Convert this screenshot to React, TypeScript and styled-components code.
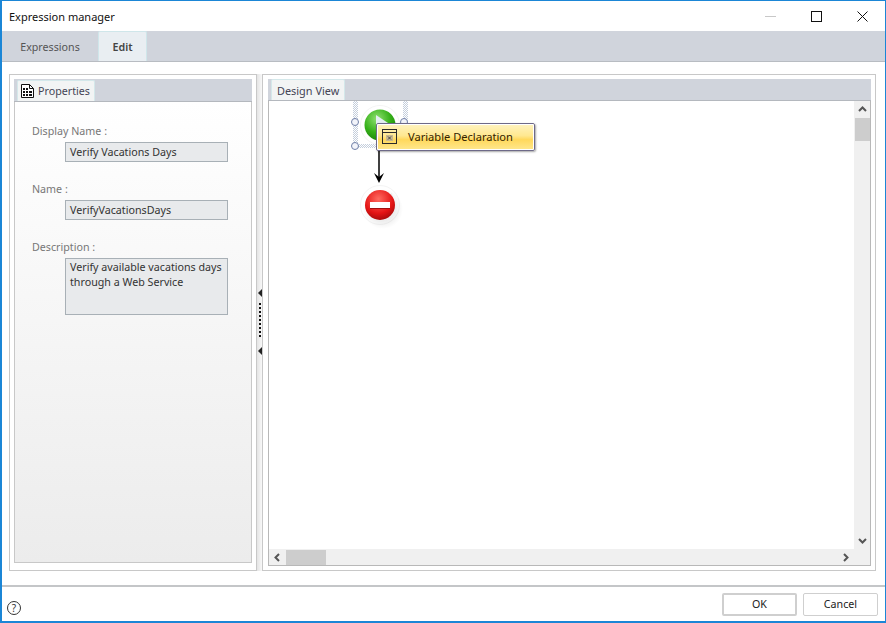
import styled, { createGlobalStyle } from 'styled-components'

const GlobalStyle = createGlobalStyle`
  html, body { margin: 0; padding: 0; background: #fff; }
  * { box-sizing: border-box; }
`

const Window = styled.div`
  width: 886px;
  height: 623px;
  display: flex;
  flex-direction: column;
  background: #fff;
  border: 1px solid #1b86d6;
  border-width: 1px 1px 2px 2px;
  font-family: 'Noto Sans', 'Open Sans', sans-serif;
  font-size: 10.7px;
  color: #333;
  overflow: hidden;
`

const TitleBar = styled.div`
  height: 30px;
  flex: none;
  display: flex;
  align-items: center;
  justify-content: space-between;
  padding-left: 7px;
  font-size: 11px;
  color: #111;
`

const WindowButtons = styled.div`
  display: flex;
  align-items: center;
`

const WindowButton = styled.span`
  width: 46px;
  height: 30px;
  display: flex;
  align-items: center;
  justify-content: center;
`

const TabBar = styled.div`
  height: 31px;
  flex: none;
  display: flex;
  align-items: flex-end;
  background: #d0d4dc;
  border-bottom: 1px solid #b8bcc2;
`

const MainTab = styled.div<{ $active?: boolean }>`
  height: 30px;
  width: ${(p) => (p.$active ? '49px' : '96px')};
  padding-top: ${(p) => (p.$active ? '0' : '2px')};
  display: flex;
  align-items: center;
  justify-content: center;
  font-weight: ${(p) => (p.$active ? 600 : 400)};
  color: ${(p) => (p.$active ? '#444' : '#555')};
  background: ${(p) => (p.$active ? '#e9eef2' : 'transparent')};
  border: ${(p) => (p.$active ? '1px solid #cfe6ea' : 'none')};
  border-bottom: none;
  border-radius: 2px 2px 0 0;
`

const Body = styled.div`
  flex: 1;
  min-height: 0;
  display: grid;
  grid-template-columns: 248px 5px 1fr;
  padding: 12px 9px 14px 7px;
  border-bottom: 2px solid #c4c6c8;
`

const Panel = styled.div<{ $side: 'left' | 'right' }>`
  display: flex;
  flex-direction: column;
  border: 1px solid #c8c8c8;
  padding: 4px 4px ${(p) => (p.$side === 'left' ? '7px' : '4px')}
    ${(p) => (p.$side === 'left' ? '4px' : '5px')};
`

const Splitter = styled.div`
  background: linear-gradient(90deg, #e4e4e4, #f8f8f8);
  display: flex;
  flex-direction: column;
  align-items: center;
  justify-content: center;
  gap: 6px;
  padding-bottom: 1px;
`

const SplitterArrow = styled.span`
  width: 0;
  height: 0;
  border-top: 4px solid transparent;
  border-bottom: 4px solid transparent;
  border-right: 4px solid #222;
`

const SplitterDots = styled.span`
  width: 2px;
  height: 36px;
  margin-bottom: 2px;
  background: repeating-linear-gradient(180deg, #111 0 2px, transparent 2px 4px);
`

const TabStrip = styled.div<{ $short?: boolean }>`
  height: ${(p) => (p.$short ? '22px' : '23px')};
  flex: none;
  display: flex;
  align-items: flex-end;
  padding-left: 3px;
  background: #d0d4dc;
  border-bottom: 1px solid #b4b8be;
`

const PanelTab = styled.div<{ $wide?: boolean }>`
  height: 21px;
  display: flex;
  align-items: center;
  gap: 4px;
  padding: ${(p) => (p.$wide ? '0 5px' : '0 4px 0 3px')};
  font-size: ${(p) => (p.$wide ? '10.9px' : 'inherit')};
  background: #f2f4f4;
  border: 1px solid #d4e8ea;
  border-bottom: none;
  border-radius: 2px 2px 0 0;
  color: #445;
`

const PropertiesBox = styled.div`
  flex: 1;
  display: flex;
  flex-direction: column;
  padding: 21px 0 0 17px;
  border: 1px solid #c8c8c8;
  border-top: none;
  background: linear-gradient(180deg, #fff 0%, #ececec 100%);
`

const FieldLabel = styled.div`
  height: 16px;
  line-height: 16px;
  color: #777;
`

const FieldValue = styled.div<{ $tall?: boolean }>`
  width: 163px;
  height: ${(p) => (p.$tall ? '57px' : '20px')};
  margin: 3px 0 19px 33px;
  padding: ${(p) => (p.$tall ? '1px 4px' : '0 4px')};
  line-height: ${(p) => (p.$tall ? '15px' : '18px')};
  background: #e8eaec;
  border: 1px solid #a8b0b6;
  color: #333;
  white-space: nowrap;
`

const DesignArea = styled.div`
  flex: 1;
  min-height: 0;
  display: grid;
  grid-template-columns: 1fr 16px;
  grid-template-rows: 1fr 16px;
  border: 1px solid #b8b8b8;
  border-top: none;
`

const Canvas = styled.div`
  position: relative;
  background: #fff;
  overflow: hidden;
`

const VScroll = styled.div`
  display: flex;
  flex-direction: column;
  align-items: center;
  background: #f0f0f0;
`

const HScroll = styled.div`
  display: flex;
  align-items: center;
  background: #f0f0f0;
`

const ScrollArrow = styled.span<{ $vertical?: boolean }>`
  width: ${(p) => (p.$vertical ? '16px' : '17px')};
  height: ${(p) => (p.$vertical ? '17px' : '16px')};
  flex: none;
  display: flex;
  align-items: center;
  justify-content: center;
`

const VThumb = styled.div`
  width: 15px;
  height: 23px;
  background: #cdcdcd;
`

const HThumb = styled.div`
  width: 40px;
  height: 15px;
  background: #cdcdcd;
`

const Spacer = styled.div`
  flex: 1;
`

const Corner = styled.div`
  background: #f0f0f0;
`

const SelectionFrame = styled.div`
  position: absolute;
  left: 84px;
  top: 0;
  width: 55px;
  height: 47px;
  background: repeating-conic-gradient(#c4cedc 0 25%, #fff 0 50%) 0 0 / 2px 2px;
  &::after {
    content: '';
    position: absolute;
    left: 5px;
    right: 5px;
    top: 0;
    bottom: 4px;
    background: #fff;
  }
`

const Handle = styled.span<{ $x: number; $y: number }>`
  position: absolute;
  left: ${(p) => p.$x}px;
  top: ${(p) => p.$y}px;
  width: 8px;
  height: 8px;
  border-radius: 50%;
  background: #f2f4fa;
  border: 1px solid #7080a8;
`

const NodeIcon = styled.svg<{ $x: number; $y: number }>`
  position: absolute;
  left: ${(p) => p.$x}px;
  top: ${(p) => p.$y}px;
`

const Popup = styled.div`
  position: absolute;
  left: 107px;
  top: 22px;
  width: 159px;
  height: 28px;
  display: flex;
  align-items: center;
  gap: 11px;
  padding: 0 0 1px 5px;
  font-size: 11.1px;
  color: #332200;
  background: linear-gradient(180deg, #fff3c0 0%, #ffe890 45%, #ffd85c 60%, #ffe88e 100%);
  border: 1px solid #6e6a88;
  outline: 1px solid #fff;
  outline-offset: -2px;
  border-radius: 2px;
  box-shadow: 1px 1px 2px rgba(0, 0, 0, 0.35);
`

const Footer = styled.div`
  flex: none;
  height: 34px;
  display: flex;
  align-items: center;
  justify-content: space-between;
  padding: 0 7px 0 5px;
`

const HelpIcon = styled.span`
  width: 14px;
  height: 14px;
  margin-top: 7px;
  display: flex;
  align-items: center;
  justify-content: center;
  border: 1px solid #333;
  border-radius: 50%;
  font-size: 10px;
  line-height: 1;
  color: #333;
`

const Buttons = styled.div`
  display: flex;
  gap: 6px;
`

const Button = styled.div<{ $primary?: boolean }>`
  width: 75px;
  height: 23px;
  display: flex;
  align-items: center;
  justify-content: center;
  background: #fff;
  color: #222;
  border: ${(p) => (p.$primary ? '2px solid #cfcfcf' : '1px solid #cfcfcf')};
  border-radius: 2px;
`

function PropertiesIcon() {
  return (
    <svg width="13" height="14" viewBox="0 0 13 14">
      <path d="M0.5 0.5H8.5L12.5 4.5V13.5H0.5Z" fill="#fff" stroke="#111" />
      <path d="M8.5 0.5V4.5H12.5" fill="none" stroke="#111" />
      <path
        d="M2 4h2v2H2zM5 4h2v2H5zM2 7h2v2H2zM5 7h2v2H5zM8 7h3v2H8zM2 10h2v2H2zM5 10h2v2H5zM8 10h3v2H8z"
        fill="#111"
      />
    </svg>
  )
}

function StartNode() {
  return (
    <NodeIcon $x={91} $y={4} width="40" height="40" viewBox="0 0 40 40">
      <defs>
        <radialGradient id="greenBall" cx="0.4" cy="0.3" r="0.8">
          <stop offset="0" stopColor="#8fe070" />
          <stop offset="0.55" stopColor="#35b018" />
          <stop offset="1" stopColor="#157a08" />
        </radialGradient>
      </defs>
      <circle cx="20" cy="20" r="19.5" fill="#fff" stroke="#f4f4f4" />
      <circle cx="20" cy="20" r="15.5" fill="url(#greenBall)" />
      <path d="M16 10 L31 20 L16 29 Z" fill="#e4eef2" />
    </NodeIcon>
  )
}

function EndNode() {
  return (
    <NodeIcon $x={86} $y={79} width="50" height="50" viewBox="0 0 50 50">
      <defs>
        <radialGradient id="redBall" cx="0.45" cy="0.3" r="0.8">
          <stop offset="0" stopColor="#ff6a60" />
          <stop offset="0.6" stopColor="#e41414" />
          <stop offset="1" stopColor="#900808" />
        </radialGradient>
        <radialGradient id="redShade">
          <stop offset="0.6" stopColor="#000" stopOpacity="0.07" />
          <stop offset="1" stopColor="#000" stopOpacity="0" />
        </radialGradient>
      </defs>
      <circle cx="25" cy="25" r="19.5" fill="#fff" stroke="#f4f4f4" />
      <circle cx="28" cy="29" r="20" fill="url(#redShade)" />
      <path d="M37 13l1 7-6-4z" fill="#eaeaea" />
      <circle cx="25" cy="25" r="15" fill="url(#redBall)" />
      <rect x="15" y="22" width="20" height="6" fill="#fff" />
      <rect x="15" y="28" width="20" height="1" fill="#a01010" />
    </NodeIcon>
  )
}

function Connector() {
  return (
    <NodeIcon $x={102} $y={48} width="16" height="36" viewBox="0 0 16 36">
      <path d="M8 0V30" stroke="#000" strokeWidth="1.5" fill="none" />
      <path d="M3 24 L8 28 L13 24 L8 34 Z" fill="#000" />
    </NodeIcon>
  )
}

function VariableIcon() {
  return (
    <svg width="15" height="15" viewBox="0 0 15 15">
      <rect x="0.5" y="0.5" width="14" height="14" fill="none" stroke="#2a2a2a" />
      <path d="M1 3.5H14" stroke="#2a2a2a" />
      <rect x="4" y="6" width="7" height="6" fill="#c8b890" />
      <path d="M6 7.5l3 3M9 7.5l-3 3" stroke="#444" fill="none" />
    </svg>
  )
}

function Chevron({ dir }: { dir: 'up' | 'down' | 'left' | 'right' }) {
  const paths = {
    up: 'M1 6 L4.5 2.5 L8 6',
    down: 'M1 3 L4.5 6.5 L8 3',
    left: 'M6 1 L2.5 4.5 L6 8',
    right: 'M3 1 L6.5 4.5 L3 8',
  }
  return (
    <svg width="9" height="9" viewBox="0 0 9 9">
      <path d={paths[dir]} stroke="#555" strokeWidth="2" fill="none" />
    </svg>
  )
}

export default function App() {
  return (
    <Window>
      <GlobalStyle />
      <TitleBar>
        Expression manager
        <WindowButtons>
          <WindowButton>
            <svg width="11" height="11" viewBox="0 0 11 11">
              <path d="M0 5.5H11" stroke="#c8c8c8" />
            </svg>
          </WindowButton>
          <WindowButton>
            <svg width="11" height="11" viewBox="0 0 11 11">
              <rect x="0.5" y="0.5" width="10" height="10" fill="none" stroke="#111" />
            </svg>
          </WindowButton>
          <WindowButton>
            <svg width="11" height="11" viewBox="0 0 11 11">
              <path d="M0.5 0.5L10.5 10.5M10.5 0.5L0.5 10.5" stroke="#111" />
            </svg>
          </WindowButton>
        </WindowButtons>
      </TitleBar>
      <TabBar>
        <MainTab>Expressions</MainTab>
        <MainTab $active>Edit</MainTab>
      </TabBar>
      <Body>
        <Panel $side="left">
          <TabStrip>
            <PanelTab>
              <PropertiesIcon />
              Properties
            </PanelTab>
          </TabStrip>
          <PropertiesBox>
            <FieldLabel>Display Name :</FieldLabel>
            <FieldValue>Verify Vacations Days</FieldValue>
            <FieldLabel>Name :</FieldLabel>
            <FieldValue>VerifyVacationsDays</FieldValue>
            <FieldLabel>Description :</FieldLabel>
            <FieldValue $tall>
              Verify available vacations days
              <br />
              through a Web Service
            </FieldValue>
          </PropertiesBox>
        </Panel>
        <Splitter>
          <SplitterArrow />
          <SplitterDots />
          <SplitterArrow />
        </Splitter>
        <Panel $side="right">
          <TabStrip $short>
            <PanelTab $wide>Design View</PanelTab>
          </TabStrip>
          <DesignArea>
            <Canvas>
              <SelectionFrame />
              <StartNode />
              <Handle $x={82} $y={17} />
              <Handle $x={131} $y={17} />
              <Handle $x={82} $y={41} />
              <Connector />
              <EndNode />
              <Popup>
                <VariableIcon />
                Variable Declaration
              </Popup>
            </Canvas>
            <VScroll>
              <ScrollArrow $vertical>
                <Chevron dir="up" />
              </ScrollArrow>
              <VThumb />
              <Spacer />
              <ScrollArrow $vertical>
                <Chevron dir="down" />
              </ScrollArrow>
            </VScroll>
            <HScroll>
              <ScrollArrow>
                <Chevron dir="left" />
              </ScrollArrow>
              <HThumb />
              <Spacer />
              <ScrollArrow>
                <Chevron dir="right" />
              </ScrollArrow>
            </HScroll>
            <Corner />
          </DesignArea>
        </Panel>
      </Body>
      <Footer>
        <HelpIcon>?</HelpIcon>
        <Buttons>
          <Button $primary>OK</Button>
          <Button>Cancel</Button>
        </Buttons>
      </Footer>
    </Window>
  )
}
